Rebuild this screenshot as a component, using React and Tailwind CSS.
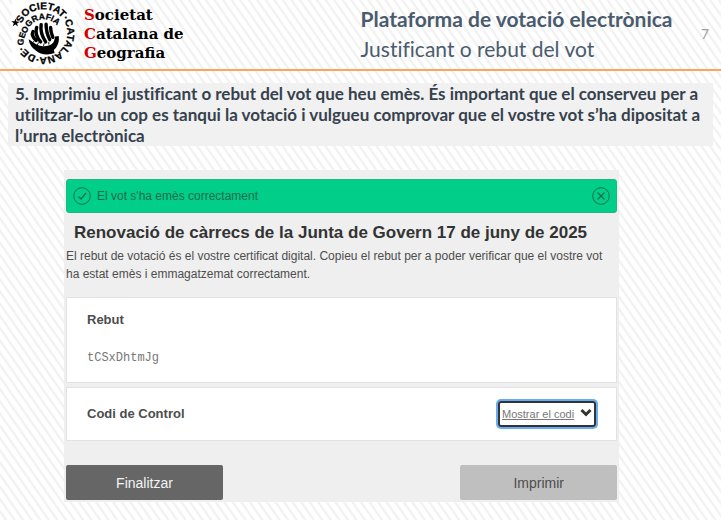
import React from 'react';

function Seal() {
  return (
    <svg viewBox="0 0 64 66" className="h-[66px] w-16 overflow-visible bg-white" role="img" aria-label="Societat Catalana de Geografia">
      <defs>
        {/* Outer ring that winds into the inner one */}
        <path id="spiral" d="M9.500 23.500A24 24 0 1 1 11.500 46.500A24 24 0 0 1 15.500 31A17 17 0 0 1 48.500 38.500" />
      </defs>
      <text fontFamily="'Liberation Sans', sans-serif" fontWeight="700" fontSize="10" fill="#000" stroke="#000" strokeWidth="0.300">
        <textPath href="#spiral">
          SOCIETAT·CATALANA·DE·<tspan fontSize="8.500">GEOGRAFIA</tspan>
        </textPath>
      </text>
      <path d="M3.500 18.500l1 3 3.200.2-2.600 1.800.8 3.100-2.500-2-2.700 1.700 1.100-3-2.500-2 3.200 0z" fill="#000" />
      <g transform="translate(3.500 4.500) scale(.9)">
        {/* Hull */}
        <path d="M14.500 38.500c4 2 8 6.500 14 7.500 7 1 13-1 14.500-6l1-4.500 4-.5c1 6-1 12-5.500 15.500l1 3.500c-7 2.500-16 2-21-3-4.500-3-7-7-8-12.500z" fill="#000" />
        {/* Sails */}
        <g fill="none" stroke="#000" strokeWidth="3.800" strokeLinecap="round">
          <path d="M19.500 30c-2 4 0 7 3.500 10" />
          <path d="M23.500 25.500c-2 6 0 11 4.500 16" />
          <path d="M28.500 22.500c-1 7 1 13 5 19" />
          <path d="M34 22c0 6 1.500 12 4 17" />
          <path d="M39 25.500c0 4 1 7 2.500 11" />
        </g>
        <path d="M19 42.500l2-2M24 45l2-3M31 46l1-3M37 44.500v-3" stroke="#000" strokeWidth="1" />
      </g>
    </svg>
  );
}

const brand = [
  ['S', 'ocietat'],
  ['C', 'atalana de'],
  ['G', 'eografia'],
];

function Header() {
  return (
    <header className="flex h-[71px] items-start border-b-2 border-[#ffa45c] font-[Lato,sans-serif] text-[#4a5b6e]">
      <div className="flex w-1/2 pl-3">
        <Seal />
        <div className="ml-2 pt-1.5 font-['DejaVu_Serif',serif] text-[15px] leading-[19px] font-bold text-black">
          {brand.map(([initial, rest]) => (
            <p key={initial}>
              <span className="text-[#d40000]">{initial}</span>
              {rest}
            </p>
          ))}
        </div>
      </div>
      <div className="flex-1 pt-1 leading-[30px] whitespace-nowrap [font-variant-ligatures:none]">
        <h1 className="text-[21px] font-bold">Plataforma de votació electrònica</h1>
        <p className="text-[21px]">Justificant o rebut del vot</p>
      </div>
      <span className="pt-6 pr-3 text-sm text-[#a0a0a0]">7</span>
    </header>
  );
}

function Receipt() {
  return (
    <section className="mt-6 ml-16 w-[77%] bg-[#efefef] px-[2px] pt-[9px] pb-[2px] font-['Liberation_Sans',sans-serif] text-[#4d4d4d]">
      <div role="status" className="flex h-[34px] items-center rounded-[3px] border border-[#1db783] bg-[#00ce89] px-1.5 text-xs text-[#1c6b4e]">
        <svg viewBox="0 0 18 18" className="size-[18px]" fill="none" stroke="#14704f" aria-hidden="true">
          <circle cx="9" cy="9" r="8.300" />
          <path d="M5.500 9.500l2.500 2.500 5-6" strokeWidth="1.400" />
        </svg>
        <span className="ml-1.5">El vot s'ha emès correctament</span>
        <button type="button" aria-label="Tanca" className="ml-auto">
          <svg viewBox="0 0 18 18" className="size-[18px]" fill="none" stroke="#14704f">
            <circle cx="9" cy="9" r="8.300" />
            <path d="M5.500 5.500l7 7M12.500 5.500l-7 7" strokeWidth="1.400" />
          </svg>
        </button>
      </div>

      <h2 className="mt-2 pl-2 text-[17px] leading-6 font-bold text-[#333]">Renovació de càrrecs de la Junta de Govern 17 de juny de 2025</h2>
      <p className="mt-0.5 text-xs leading-[18px]">
        El rebut de votació és el vostre certificat digital. Copieu el rebut per a poder verificar que el vostre vot ha estat emès i emmagatzemat correctament.
      </p>

      <div className="mt-3.5 border border-[#e2e2e2] bg-white px-5 pt-3 pb-4">
        <h3 className="text-[13px] leading-5 font-bold">Rebut</h3>
        <p className="mt-5 font-['Liberation_Mono',monospace] text-xs leading-4 text-[#777]">tCSxDhtmJg</p>
      </div>

      <div className="mt-1 flex h-[54px] items-center justify-between border border-[#e2e2e2] bg-white px-5">
        <h3 className="text-[13px] font-bold">Codi de Control</h3>
        <button type="button" className="flex h-[26px] items-center gap-1.5 rounded-[3px] border-2 border-[#333] px-0.5 text-[11px] text-[#777] ring-2 ring-[#65aef5]">
          <span className="underline">Mostrar el codi</span>
          <svg viewBox="0 0 12 12" className="size-3" aria-hidden="true">
            <path d="M1.500 2l4.500 4.500L10.500 2" fill="none" stroke="#333" strokeWidth="3" />
          </svg>
        </button>
      </div>

      <div className="mt-6 flex justify-between text-sm">
        <button type="button" className="h-[35px] w-[157px] rounded-[2px] bg-[#666] text-[#f4f4f4]">Finalitzar</button>
        <button type="button" className="h-[35px] w-[157px] rounded-[2px] bg-[#bfbfbf] text-[#4d4d4d]">Imprimir</button>
      </div>
    </section>
  );
}

function App() {
  return (
    <div className="min-h-screen bg-[repeating-linear-gradient(55deg,#ffffff_0px,#ffffff_3px,#efefef_5px,#ffffff_7px)]">
      <Header />
      <main>
        <p className="mx-2 mt-3 bg-[#f1f1f1] px-[7px] font-[Lato,sans-serif] text-[17px] leading-[21px] font-bold text-[#36414d] [font-variant-ligatures:none]">
          5. Imprimiu el justificant o rebut del vot que heu emès. És important que el conserveu per a utilitzar-lo un cop es tanqui la votació i vulgueu comprovar que el vostre vot s’ha dipositat a l’urna electrònica
        </p>
        <Receipt />
      </main>
    </div>
  );
}

export default App;
